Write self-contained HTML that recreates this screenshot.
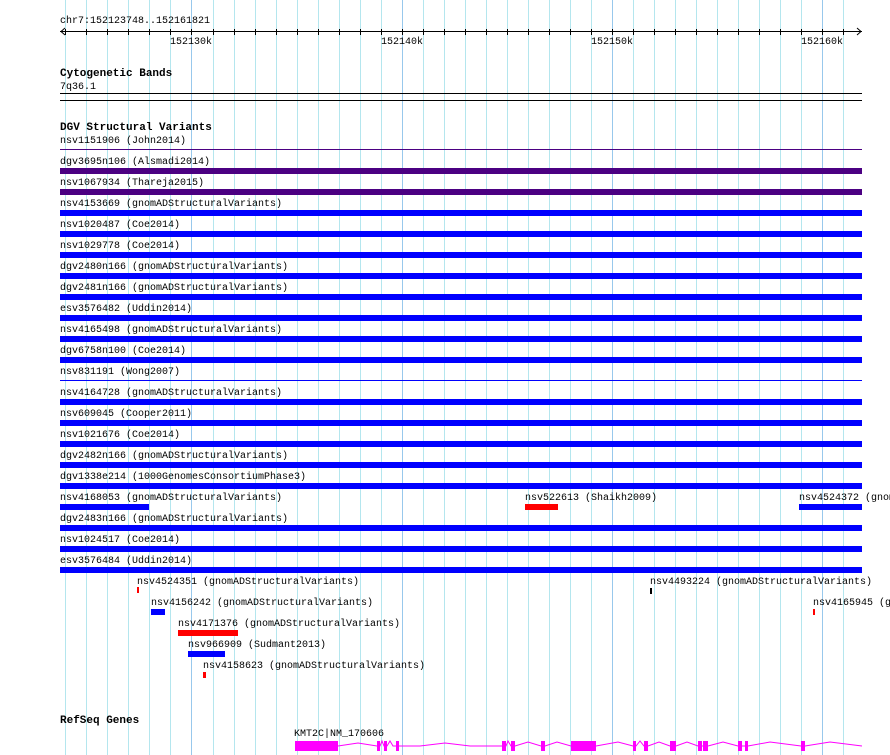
<!DOCTYPE html>
<html><head><style>
html,body{margin:0;overflow:hidden}
body{background:#fff;width:890px;height:755px;position:relative;font-family:"Liberation Mono",monospace;font-size:10px;color:#000}
.t{position:absolute;line-height:12px;white-space:nowrap;padding-top:2px}
.b{position:absolute;font-weight:bold;font-size:11px;line-height:13px;white-space:nowrap;padding-top:1px}
.r{position:absolute}
svg{position:absolute;left:0;top:0}
#wrap{position:absolute;left:0;top:0;width:890px;height:755px;overflow:hidden}
</style></head><body><div id="wrap">
<svg width="890" height="755">
<g stroke="#b4e6ee" stroke-width="1">
<line x1="65.5" y1="0" x2="65.5" y2="755"/><line x1="86.5" y1="0" x2="86.5" y2="755"/><line x1="107.5" y1="0" x2="107.5" y2="755"/><line x1="128.5" y1="0" x2="128.5" y2="755"/><line x1="149.5" y1="0" x2="149.5" y2="755"/><line x1="170.5" y1="0" x2="170.5" y2="755"/>
<line x1="213.5" y1="0" x2="213.5" y2="755"/><line x1="234.5" y1="0" x2="234.5" y2="755"/><line x1="255.5" y1="0" x2="255.5" y2="755"/><line x1="276.5" y1="0" x2="276.5" y2="755"/><line x1="297.5" y1="0" x2="297.5" y2="755"/><line x1="318.5" y1="0" x2="318.5" y2="755"/><line x1="339.5" y1="0" x2="339.5" y2="755"/><line x1="360.5" y1="0" x2="360.5" y2="755"/><line x1="381.5" y1="0" x2="381.5" y2="755"/>
<line x1="423.5" y1="0" x2="423.5" y2="755"/><line x1="444.5" y1="0" x2="444.5" y2="755"/><line x1="465.5" y1="0" x2="465.5" y2="755"/><line x1="486.5" y1="0" x2="486.5" y2="755"/><line x1="507.5" y1="0" x2="507.5" y2="755"/><line x1="528.5" y1="0" x2="528.5" y2="755"/><line x1="549.5" y1="0" x2="549.5" y2="755"/><line x1="570.5" y1="0" x2="570.5" y2="755"/><line x1="591.5" y1="0" x2="591.5" y2="755"/>
<line x1="633.5" y1="0" x2="633.5" y2="755"/><line x1="654.5" y1="0" x2="654.5" y2="755"/><line x1="675.5" y1="0" x2="675.5" y2="755"/><line x1="696.5" y1="0" x2="696.5" y2="755"/><line x1="717.5" y1="0" x2="717.5" y2="755"/><line x1="738.5" y1="0" x2="738.5" y2="755"/><line x1="759.5" y1="0" x2="759.5" y2="755"/><line x1="780.5" y1="0" x2="780.5" y2="755"/><line x1="801.5" y1="0" x2="801.5" y2="755"/>
<line x1="843.5" y1="0" x2="843.5" y2="755"/>
</g>
<g stroke="#98c8ec" stroke-width="1">
<line x1="191.5" y1="0" x2="191.5" y2="755"/><line x1="402.5" y1="0" x2="402.5" y2="755"/><line x1="612.5" y1="0" x2="612.5" y2="755"/><line x1="822.5" y1="0" x2="822.5" y2="755"/>
</g>
<g stroke="#000" stroke-width="1">
<line x1="60" y1="31.5" x2="862" y2="31.5"/>
<polyline points="65,28 61,31.5 65,35" fill="none"/>
<polyline points="857,28 861,31.5 857,35" fill="none"/>
<path d="M65.5 29v6M86.5 29v6M107.5 29v6M128.5 29v6M149.5 29v6M170.5 29v6M191.5 29v6M213.5 29v6M234.5 29v6M255.5 29v6M276.5 29v6M297.5 29v6M318.5 29v6M339.5 29v6M360.5 29v6M381.5 29v6M402.5 29v6M423.5 29v6M444.5 29v6M465.5 29v6M486.5 29v6M507.5 29v6M528.5 29v6M549.5 29v6M570.5 29v6M591.5 29v6M612.5 29v6M633.5 29v6M654.5 29v6M675.5 29v6M696.5 29v6M717.5 29v6M738.5 29v6M759.5 29v6M780.5 29v6M801.5 29v6M822.5 29v6M843.5 29v6"/>
<line x1="60" y1="93.5" x2="862" y2="93.5"/>
<line x1="60" y1="100.5" x2="862" y2="100.5"/>
</g>
<g fill="#ff00ff">
<rect x="295" y="741" width="43" height="10"/>
<rect x="377" y="741" width="3" height="10"/><rect x="384" y="741" width="3" height="10"/><rect x="396" y="741" width="3" height="10"/>
<rect x="502" y="741" width="4" height="10"/><rect x="511" y="741" width="4" height="10"/>
<rect x="541" y="741" width="4" height="10"/>
<rect x="571" y="741" width="25" height="10"/>
<rect x="633" y="741" width="3" height="10"/><rect x="644" y="741" width="4" height="10"/>
<rect x="670" y="741" width="6" height="10"/>
<rect x="698" y="741" width="4" height="10"/><rect x="703" y="741" width="5" height="10"/>
<rect x="738" y="741" width="4" height="10"/><rect x="745" y="741" width="3" height="10"/>
<rect x="801" y="741" width="4" height="10"/>
</g>
<polyline fill="none" stroke="#ff00ff" stroke-width="1" points="338,746 358,743 377,746 380,746 382,741 384,746 387,746 390,741 393,746 396,746 399,746 420,746 445,743 470,746 502,746 506,746 508,741 511,746 515,746 528,742 541,746 545,746 557,742 571,746 596,746 618,742 633,746 636,746 640,741 644,746 648,746 659,742 670,746 676,746 687,742 698,746 708,746 723,742 738,746 748,746 770,742 801,746 805,746 830,742 862,746"/>
</svg>

<div class="t" style="left:60px;top:14px">chr7:152123748..152161821</div>
<div class="t" style="left:170px;top:35px">152130k</div>
<div class="t" style="left:381px;top:35px">152140k</div>
<div class="t" style="left:591px;top:35px">152150k</div>
<div class="t" style="left:801px;top:35px">152160k</div>

<div class="b" style="left:60px;top:67px">Cytogenetic Bands</div>
<div class="t" style="left:60px;top:80px">7q36.1</div>
<div class="b" style="left:60px;top:121px">DGV Structural Variants</div>

<div class="t" style="left:60px;top:134px">nsv1151906 (John2014)</div>
<div class="r" style="left:60px;top:149px;width:802px;height:1px;background:#4b0082"></div>
<div class="t" style="left:60px;top:155px">dgv3695n106 (Alsmadi2014)</div>
<div class="r" style="left:60px;top:168px;width:802px;height:6px;background:#4b0082"></div>
<div class="t" style="left:60px;top:176px">nsv1067934 (Thareja2015)</div>
<div class="r" style="left:60px;top:189px;width:802px;height:6px;background:#4b0082"></div>
<div class="t" style="left:60px;top:197px">nsv4153669 (gnomADStructuralVariants)</div>
<div class="r" style="left:60px;top:210px;width:802px;height:6px;background:#0000ff"></div>
<div class="t" style="left:60px;top:218px">nsv1020487 (Coe2014)</div>
<div class="r" style="left:60px;top:231px;width:802px;height:6px;background:#0000ff"></div>
<div class="t" style="left:60px;top:239px">nsv1029778 (Coe2014)</div>
<div class="r" style="left:60px;top:252px;width:802px;height:6px;background:#0000ff"></div>
<div class="t" style="left:60px;top:260px">dgv2480n166 (gnomADStructuralVariants)</div>
<div class="r" style="left:60px;top:273px;width:802px;height:6px;background:#0000ff"></div>
<div class="t" style="left:60px;top:281px">dgv2481n166 (gnomADStructuralVariants)</div>
<div class="r" style="left:60px;top:294px;width:802px;height:6px;background:#0000ff"></div>
<div class="t" style="left:60px;top:302px">esv3576482 (Uddin2014)</div>
<div class="r" style="left:60px;top:315px;width:802px;height:6px;background:#0000ff"></div>
<div class="t" style="left:60px;top:323px">nsv4165498 (gnomADStructuralVariants)</div>
<div class="r" style="left:60px;top:336px;width:802px;height:6px;background:#0000ff"></div>
<div class="t" style="left:60px;top:344px">dgv6758n100 (Coe2014)</div>
<div class="r" style="left:60px;top:357px;width:802px;height:6px;background:#0000ff"></div>
<div class="t" style="left:60px;top:365px">nsv831191 (Wong2007)</div>
<div class="r" style="left:60px;top:380px;width:802px;height:1px;background:#0000ff"></div>
<div class="t" style="left:60px;top:386px">nsv4164728 (gnomADStructuralVariants)</div>
<div class="r" style="left:60px;top:399px;width:802px;height:6px;background:#0000ff"></div>
<div class="t" style="left:60px;top:407px">nsv609045 (Cooper2011)</div>
<div class="r" style="left:60px;top:420px;width:802px;height:6px;background:#0000ff"></div>
<div class="t" style="left:60px;top:428px">nsv1021676 (Coe2014)</div>
<div class="r" style="left:60px;top:441px;width:802px;height:6px;background:#0000ff"></div>
<div class="t" style="left:60px;top:449px">dgv2482n166 (gnomADStructuralVariants)</div>
<div class="r" style="left:60px;top:462px;width:802px;height:6px;background:#0000ff"></div>
<div class="t" style="left:60px;top:470px">dgv1338e214 (1000GenomesConsortiumPhase3)</div>
<div class="r" style="left:60px;top:483px;width:802px;height:6px;background:#0000ff"></div>
<div class="t" style="left:60px;top:491px">nsv4168053 (gnomADStructuralVariants)</div>
<div class="r" style="left:60px;top:504px;width:89px;height:6px;background:#0000ff"></div>
<div class="t" style="left:525px;top:491px">nsv522613 (Shaikh2009)</div>
<div class="r" style="left:525px;top:504px;width:33px;height:6px;background:#ff0000"></div>
<div class="t" style="left:799px;top:491px">nsv4524372 (gnomADStructuralVariants)</div>
<div class="r" style="left:799px;top:504px;width:63px;height:6px;background:#0000ff"></div>
<div class="t" style="left:60px;top:512px">dgv2483n166 (gnomADStructuralVariants)</div>
<div class="r" style="left:60px;top:525px;width:802px;height:6px;background:#0000ff"></div>
<div class="t" style="left:60px;top:533px">nsv1024517 (Coe2014)</div>
<div class="r" style="left:60px;top:546px;width:802px;height:6px;background:#0000ff"></div>
<div class="t" style="left:60px;top:554px">esv3576484 (Uddin2014)</div>
<div class="r" style="left:60px;top:567px;width:802px;height:6px;background:#0000ff"></div>

<div class="t" style="left:137px;top:575px">nsv4524351 (gnomADStructuralVariants)</div>
<div class="r" style="left:137px;top:587px;width:2px;height:6px;background:#ff0000"></div>
<div class="t" style="left:650px;top:575px">nsv4493224 (gnomADStructuralVariants)</div>
<div class="r" style="left:650px;top:588px;width:2px;height:6px;background:#000"></div>
<div class="t" style="left:151px;top:596px">nsv4156242 (gnomADStructuralVariants)</div>
<div class="r" style="left:151px;top:609px;width:14px;height:6px;background:#0000ff"></div>
<div class="t" style="left:813px;top:596px">nsv4165945 (gnomADStructuralVariants)</div>
<div class="r" style="left:813px;top:609px;width:2px;height:6px;background:#ff0000"></div>
<div class="t" style="left:178px;top:617px">nsv4171376 (gnomADStructuralVariants)</div>
<div class="r" style="left:178px;top:630px;width:60px;height:6px;background:#ff0000"></div>
<div class="t" style="left:188px;top:638px">nsv966909 (Sudmant2013)</div>
<div class="r" style="left:188px;top:651px;width:37px;height:6px;background:#0000ff"></div>
<div class="t" style="left:203px;top:659px">nsv4158623 (gnomADStructuralVariants)</div>
<div class="r" style="left:203px;top:672px;width:3px;height:6px;background:#ff0000"></div>

<div class="b" style="left:60px;top:714px">RefSeq Genes</div>
<div class="t" style="left:294px;top:727px">KMT2C|NM_170606</div>
</div></body></html>
